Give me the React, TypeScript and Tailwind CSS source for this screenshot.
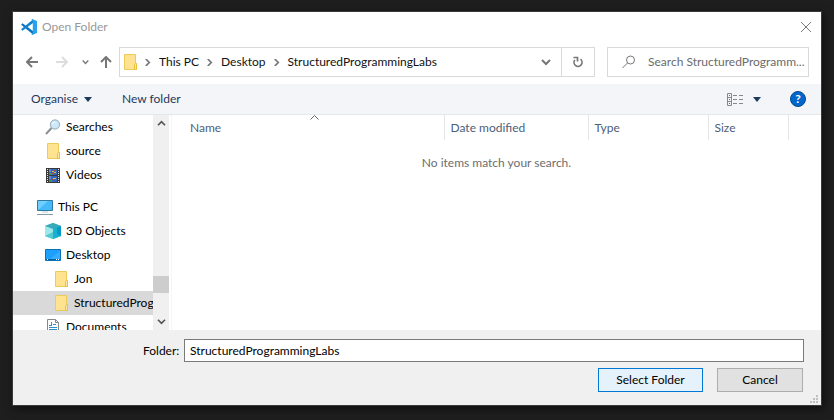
import type { ReactNode } from "react";
import { clsx } from "clsx";

const VsCodeIcon = () => (
  <svg width="16" height="16" viewBox="0 0 16 16" aria-hidden="true">
    <path d="M0.3 5.3 1.5 4.2 12 12v3.6L0.4 5.9z" fill="#0b74bd" />
    <path d="M0.3 10.7 1.5 11.8 12 4V0.4L0.4 10.1z" fill="#0f83cf" />
    <path d="M11.3 0 16 2v12l-4.7 2-1-0.8 1.5-1V1.8l-1.5-1z" fill="#27a3ee" />
  </svg>
);

const FolderIcon = () => (
  <svg width="16" height="16" viewBox="-2 0 16 16" aria-hidden="true">
    <path d="M0.5 0.5h11v9h1v6h-12z" fill="#ffe391" stroke="#eccb58" />
    <path d="M10.5 15.5v-5l1-1h1v6z" fill="#ffe9a4" stroke="#e8c13d" />
  </svg>
);

const SearchesIcon = () => (
  <svg width="16" height="16" viewBox="0 0 16 16" aria-hidden="true">
    <path d="M1 15 6.5 9" stroke="#8a8f94" strokeWidth="2" />
    <circle cx="10" cy="5.5" r="4.6" fill="#cbe9fb" stroke="#8fa6b5" />
    <path d="M7.5 5.5a3 3 0 0 1 3-2.6" fill="none" stroke="#fff" />
  </svg>
);

const VideosIcon = () => (
  <svg width="14" height="16" viewBox="0 0 14 16" aria-hidden="true">
    <path d="M0 1h14v15H0z" fill="#38383a" />
    <path d="M1.5 2v13M12.5 2v13" stroke="#e8e8e8" strokeDasharray="1 1" />
    <path d="M3 2h8v6H3zM3 9h8v6H3z" fill="#3765b8" />
    <path d="M3 2h2v3H3zM3 9h2v3H3z" fill="#5c8bd8" />
    <path d="M3 6h3v2H3zM3 13h3v2H3z" fill="#3c9364" />
    <path d="M6 4h2v1H6zM8 5h2v1H8zM7 11h3v1H7z" fill="#e8bd34" />
    <path d="M8 3h2v1H8zM6 6h2v1H6zM6 12h2v1H6z" fill="#c94237" />
  </svg>
);

const ComputerIcon = () => (
  <svg width="16" height="16" viewBox="0 0 16 16" aria-hidden="true">
    <path d="M0.5 1.5h15v10H0.5z" fill="#44bafa" stroke="#317a9c" />
    <path d="M1 11 11 2H1z" fill="#70cffd" />
    <path d="M5 13h6" stroke="#b8cdd8" />
    <path d="M0 15.5h16" stroke="#7f9dac" />
  </svg>
);

const ObjectsIcon = () => (
  <svg width="16" height="16" viewBox="0 0 16 16" aria-hidden="true">
    <path d="M8 0 16 3v10l-8 3-8-3V3z" fill="#32bccb" />
    <path d="M8 0 16 3 8 6 0 3z" fill="#38a9b8" />
    <path d="M0 3 8 6v10l-8-3z" fill="#9ce8ea" />
    <path d="M8 6 16 3v10l-8 3z" fill="#18b1d2" />
    <path d="M12 4.5 16 3v10l-4-2z" fill="#0798c5" />
    <path d="M0 13 8 9v7z" fill="#55c9d2" />
  </svg>
);

const DesktopIcon = () => (
  <svg width="16" height="16" viewBox="0 0 16 16" aria-hidden="true">
    <path d="M0.5 2.5h15v11H0.5z" fill="#1da0fb" stroke="#0872b5" />
    <path d="M5 12 15 4v8z" fill="#35adff" />
    <path d="M1 12.5h14" stroke="#075f9c" />
    <path d="M2 12.5h1M11 12.5h3" stroke="#fff" strokeDasharray="1 1" />
  </svg>
);

const DocumentsIcon = () => (
  <svg width="12" height="16" viewBox="0 0 12 16" aria-hidden="true">
    <path d="M0.5 0.5h8l3 3v12h-11z" fill="#fff" stroke="#84898e" />
    <path d="M8.5 0.5v3h3" fill="none" stroke="#84898e" />
    <path d="M2 6.5h3M6 5.5h3M2 8.5h8M2 10.5h8M2 12.5h3M6 12.5h4M4.5 3v4" stroke="#2f8fc9" />
  </svg>
);

type ChevronProps = { dir: "up" | "down" | "right"; className?: string };

const chevrons = {
  up: "M1 6 5 2l4 4",
  down: "M1 2l4 4 4-4",
  right: "M3 0l4 4-4 4",
};

const Chevron = ({ dir, className }: ChevronProps) => (
  <svg
    viewBox="0 0 10 8"
    fill="none"
    stroke="currentColor"
    strokeWidth="2"
    aria-hidden="true"
    className={clsx("shrink-0", className)}
  >
    <path d={chevrons[dir]} />
  </svg>
);

const Arrow = ({ d }: { d: string }) => (
  <svg width="12" height="12" viewBox="0 0 12 12" fill="none" stroke="currentColor" strokeWidth="2" aria-hidden="true">
    <path d={d} />
  </svg>
);

const Caret = () => (
  <svg width="8" height="5" viewBox="0 0 8 5" fill="#1e395b" aria-hidden="true">
    <path d="M0 0h8L4 5z" />
  </svg>
);

type TreeItem = {
  label: string;
  icon: ReactNode;
  level: 0 | 1 | 2;
  spaced?: boolean;
  selected?: boolean;
};

const tree: TreeItem[] = [
  { label: "Searches", icon: <SearchesIcon />, level: 1 },
  { label: "source", icon: <FolderIcon />, level: 1 },
  { label: "Videos", icon: <VideosIcon />, level: 1 },
  { label: "This PC", icon: <ComputerIcon />, level: 0, spaced: true },
  { label: "3D Objects", icon: <ObjectsIcon />, level: 1 },
  { label: "Desktop", icon: <DesktopIcon />, level: 1 },
  { label: "Jon", icon: <FolderIcon />, level: 2 },
  { label: "StructuredProgrammingLabs", icon: <FolderIcon />, level: 2, selected: true },
  { label: "Documents", icon: <DocumentsIcon />, level: 1 },
];

const indents = ["pl-6", "pl-8", "pl-10"];

const TitleBar = () => (
  <header className="flex h-[30px] items-center pl-2 pr-[9px]">
    <VsCodeIcon />
    <h1 className="ml-[5px] flex-1 text-[#999]">Open Folder</h1>
    <button aria-label="Close" className="text-[#777]">
      <svg width="12" height="12" viewBox="0 0 12 12" stroke="currentColor" aria-hidden="true">
        <path d="M1 1l10 10M11 1 1 11" />
      </svg>
    </button>
  </header>
);

const AddressBar = () => (
  <div className="flex h-[42px] items-center pb-[7px] pl-[13px] pr-3 pt-[5px] text-[#777]">
    <button aria-label="Back">
      <Arrow d="M12 6H1M6 1 1 6l5 5" />
    </button>
    <button aria-label="Forward" className="ml-[18px] text-[#ddd]">
      <Arrow d="M0 6h11M6 1l5 5-5 5" />
    </button>
    <button aria-label="Recent locations" className="ml-[14px]">
      <Chevron dir="down" className="h-[6px] w-[7px]" />
    </button>
    <button aria-label="Up" className="ml-[11px] mr-[7px]">
      <Arrow d="M6 12V1M1 6l5-5 5 5" />
    </button>
    <nav aria-label="Address" className="flex h-[30px] flex-1 items-center border border-[#d9d9d9] pl-[2px] text-[#111]">
      <FolderIcon />
      {["This PC", "Desktop", "StructuredProgrammingLabs"].map((part) => (
        <span key={part} className="flex items-center">
          <Chevron dir="right" className="mx-[5px] h-[7px] w-[9px] text-[#777]" />
          <a href="#" className="pl-[2px] pr-px">
            {part}
          </a>
        </span>
      ))}
      <button aria-label="Previous locations" className="ml-auto mr-[10px] text-[#777]">
        <Chevron dir="down" className="h-2 w-[10px]" />
      </button>
      <button aria-label="Refresh" className="flex h-full w-[33px] items-center justify-center border-l border-[#d9d9d9] text-[#777]">
        <svg width="12" height="12" viewBox="0 0 12 12" fill="none" stroke="currentColor" strokeWidth="1.700" aria-hidden="true">
          <path d="M8.500 3.200A4 4 0 1 1 2.800 4" />
          <path d="M1.500 1.500h4v4" />
        </svg>
      </button>
    </nav>
    <label className="ml-3 flex h-[30px] w-[202px] items-center border border-[#d9d9d9] pl-[14px]">
      <svg width="14" height="14" viewBox="0 0 14 14" fill="none" stroke="currentColor" aria-hidden="true" className="shrink-0">
        <circle cx="8.500" cy="5" r="4" />
        <path d="M5.500 8 0.500 13" />
      </svg>
      <input
        type="text"
        aria-label="Search StructuredProgrammingLabs"
        placeholder="Search StructuredProgramm..."
        className="ml-3 min-w-0 flex-1 outline-none placeholder:text-[#6b6b6b]"
      />
    </label>
  </div>
);

const Toolbar = () => (
  <div className="flex h-[31px] items-center border-b border-[#e5e7ea] bg-[#f4f5f8] pl-[18px] pr-[15px] text-[#1e395b]">
    <button className="flex items-center gap-[6px]">
      Organise
      <Caret />
    </button>
    <button className="ml-[30px]">New folder</button>
    <button aria-label="Change your view" className="ml-auto flex items-center gap-[9px]">
      <svg width="17" height="13" viewBox="0 0 17 13" fill="none" stroke="#888" aria-hidden="true">
        <path d="M0.500 0.500h4v12h-4zM0.500 4.500h4M0.500 8.500h4" />
        <path d="M6 2.500h4M12 2.500h4M6 6.500h4M12 6.500h4M6 10.500h4M12 10.500h4" />
        <path d="M2 2.500h1M2 6.500h1" stroke="#457ab5" />
        <path d="M2 10.500h1" stroke="#c62f3f" />
      </svg>
      <Caret />
    </button>
    <button
      aria-label="Help"
      className="ml-[29px] flex size-4 items-center justify-center rounded-full border border-[#004a8c] bg-[#0066cc] font-bold text-white"
    >
      ?
    </button>
  </div>
);

const FolderTree = () => (
  <div className="flex w-[156px] shrink-0 overflow-hidden">
    <ul className="w-[140px] overflow-hidden">
      {tree.map((item) => (
        <li key={item.label} className={clsx(item.spaced && "mt-2")}>
          <button
            className={clsx(
              "flex h-6 w-full items-center gap-[5px] overflow-hidden whitespace-nowrap text-black",
              indents[item.level],
              item.selected && "bg-[#d9d9d9]"
            )}
          >
            <span className="flex w-4 shrink-0 justify-center">{item.icon}</span>
            {item.label}
          </button>
        </li>
      ))}
    </ul>
    <div className="flex w-4 flex-col items-center bg-[#f0f0f0] text-[#555]">
      <button aria-label="Scroll up" className="flex h-[17px] w-full items-center justify-center">
        <Chevron dir="up" className="h-[7px] w-[9px]" />
      </button>
      <div className="flex w-full flex-1 flex-col justify-end pb-5">
        <div className="h-[17px] bg-[#cdcdcd]" />
      </div>
      <button aria-label="Scroll down" className="flex h-[17px] w-full items-center justify-center">
        <Chevron dir="down" className="h-[7px] w-[9px]" />
      </button>
    </div>
  </div>
);

const FileList = () => (
  <div className="relative ml-[2px] flex-1 border-l border-[#f5f5f5]">
    <table className="w-full table-fixed border-collapse">
      <thead>
        <tr className="h-[25px] text-left text-[#4c607a]">
          <th className="border-r border-[#e5e5e5] p-0 pl-[18px] font-normal">Name</th>
          <th className="w-36 border-r border-[#e5e5e5] p-0 pl-[6px] font-normal">Date modified</th>
          <th className="w-[120px] border-r border-[#e5e5e5] p-0 pl-[6px] font-normal">Type</th>
          <th className="w-20 border-r border-[#e5e5e5] p-0 pl-[6px] font-normal">Size</th>
          <td className="w-[33px] p-0" />
        </tr>
      </thead>
      <tbody>
        <tr>
          <td colSpan={5} className="p-0 pt-[15px] text-center text-[#6d6d6d]">
            No items match your search.
          </td>
        </tr>
      </tbody>
    </table>
    {/* sort marker sits above the Name header */}
    <svg
      width="9"
      height="5"
      viewBox="0 0 9 5"
      fill="none"
      stroke="#666"
      aria-hidden="true"
      className="absolute left-[138px] top-0"
    >
      <path d="M0.500 4.500l4-4 4 4" />
    </svg>
  </div>
);

const Footer = () => (
  <footer className="relative bg-[#f0f0f0] pb-[13px] pl-[130px] pr-[17px] pt-[9px]">
    <div className="flex items-center">
      <label htmlFor="folder" className="w-[41px] shrink-0 text-black">
        Folder:
      </label>
      <input
        id="folder"
        defaultValue="StructuredProgrammingLabs"
        className="h-[23px] min-w-0 flex-1 border border-[#7a7a7a] bg-white pl-[5px] text-black outline-none"
      />
    </div>
    <div className="mt-[6px] flex justify-end gap-[14px] pr-px text-black">
      <button className="h-6 w-[105px] border border-[#0078d7] bg-[#e5f1fb]">Select Folder</button>
      <button className="h-6 w-[86px] border border-[#adadad] bg-[#e1e1e1]">Cancel</button>
    </div>
    <svg width="8" height="8" viewBox="0 0 8 8" fill="#bfbfbf" aria-hidden="true" className="absolute bottom-[2px] right-[3px]">
      <path d="M6 0h2v2H6zM3 3h2v2H3zM6 3h2v2H6zM0 6h2v2H0zM3 6h2v2H3zM6 6h2v2H6z" />
    </svg>
  </footer>
);

export default function App() {
  return (
    <main className="min-h-screen bg-[#1e1e1e] px-3 pt-[11px] font-[Lato,'Open_Sans',sans-serif] text-[12px] leading-4">
      <section className="border border-[#3a3a3a] bg-white shadow-[2px_3px_8px_rgba(0,0,0,0.5)]">
        <TitleBar />
        <AddressBar />
        <Toolbar />
        <div className="flex h-[215px]">
          <FolderTree />
          <FileList />
        </div>
        <Footer />
      </section>
    </main>
  );
}
